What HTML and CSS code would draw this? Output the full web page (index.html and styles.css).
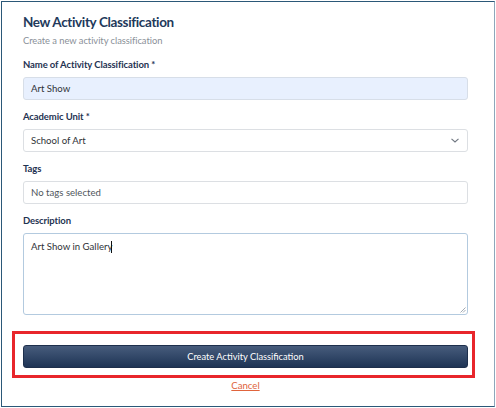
FILE: index.html
```html
<!DOCTYPE html>
<html lang="en">
<head>
<meta charset="utf-8">
<title>New Activity Classification</title>
<link rel="stylesheet" href="styles.css">
</head>
<body>
<div class="frame">
  <div class="form">
    <h1 class="title">New Activity Classification</h1>
    <p class="subtitle">Create a new activity classification</p>

    <div class="field">
      <label class="label">Name of Activity Classification *</label>
      <div class="input input-filled">Art Show</div>
    </div>

    <div class="field">
      <label class="label">Academic Unit *</label>
      <div class="input select">
        <span>School of Art</span>
        <svg class="chevron" width="8" height="5" viewBox="0 0 8 5"><polyline points="0.5,0.8 4,4 7.5,0.8" fill="none" stroke="#6f7680" stroke-width="1.1"/></svg>
      </div>
    </div>

    <div class="field">
      <label class="label">Tags</label>
      <div class="input placeholder">No tags selected</div>
    </div>

    <div class="field">
      <label class="label">Description</label>
      <div class="textarea">Art Show in Gallery<span class="caret"></span>
        <svg class="grip" width="6" height="6" viewBox="0 0 6 6"><path d="M5.5 0.5 L0.5 5.5 M5.5 3 L3 5.5" stroke="#9aa3ad" stroke-width="0.9" fill="none"/></svg>
      </div>
    </div>

    <div class="highlight">
      <button class="btn">Create Activity Classification</button>
    </div>
    <div class="cancel-row"><a class="cancel" href="#">Cancel</a></div>
  </div>
</div>
</body>
</html>
```

FILE: styles.css
```css
* { box-sizing: border-box; }
html, body { margin: 0; padding: 0; background: #ffffff; }
body { font-family: "Lato", "Noto Sans", sans-serif; }

.frame {
  margin: 1px 0 0 1px;
  width: 494px;
  height: 406px;
  border: 1px solid #2b5878;
  border-right-color: #8da7bb;
  background: #fff;
}

.form {
  padding: 10px 26px 0 21px;
  display: flex;
  flex-direction: column;
}

.title {
  margin: 0;
  font-size: 13.5px;
  line-height: 20px;
  font-weight: 700;
  letter-spacing: -0.35px;
  color: #22395b;
}

.subtitle {
  margin: 2px 0 0;
  font-size: 9.4px;
  line-height: 14px;
  letter-spacing: -0.05px;
  color: #8a9098;
}

.field {
  display: flex;
  flex-direction: column;
  margin-top: 10px;
}

.label {
  font-size: 9.5px;
  line-height: 14px;
  font-weight: 700;
  letter-spacing: -0.1px;
  color: #1f3352;
  margin-bottom: 5px;
}

.input {
  height: 23px;
  border: 1px solid #dcdfe3;
  border-radius: 3px;
  padding: 0 7px;
  display: flex;
  align-items: center;
  font-size: 9.6px;
  color: #2f3338;
  background: #fff;
}
.input-filled {
  background: #e8f0fe;
  border-color: #d7dee8;
}
.select { justify-content: space-between; padding-right: 8px; }
.chevron { display: block; }
.placeholder { color: #50565d; }

.textarea {
  position: relative;
  height: 82px;
  border: 1px solid #b3cadf;
  border-radius: 3px;
  padding: 6px 7px;
  font-size: 9.6px;
  line-height: 14px;
  color: #2f3338;
}
.caret {
  display: inline-block;
  width: 1px;
  height: 12px;
  background: #111;
  vertical-align: -3px;
  margin-left: -1px;
}
.grip {
  position: absolute;
  right: 1px;
  bottom: 1px;
}

.highlight {
  margin: 16px -7px 0 -11px;
  border: 3px solid #e8262b;
  padding: 11px 4px 7px 8px;
}

.btn {
  display: block;
  width: 100%;
  height: 23px;
  border: 1px solid #1d2f4c;
  border-radius: 3px;
  background: linear-gradient(#475c7c, #1e3455);
  color: #fff;
  font-family: "Lato", "Noto Sans", sans-serif;
  font-size: 9.3px;
  padding: 0;
}

.cancel-row {
  text-align: center;
  line-height: 12px;
  margin-top: -1px;
}
.cancel {
  font-size: 9.6px;
  color: #e0643c;
  text-decoration: underline;
}
```
